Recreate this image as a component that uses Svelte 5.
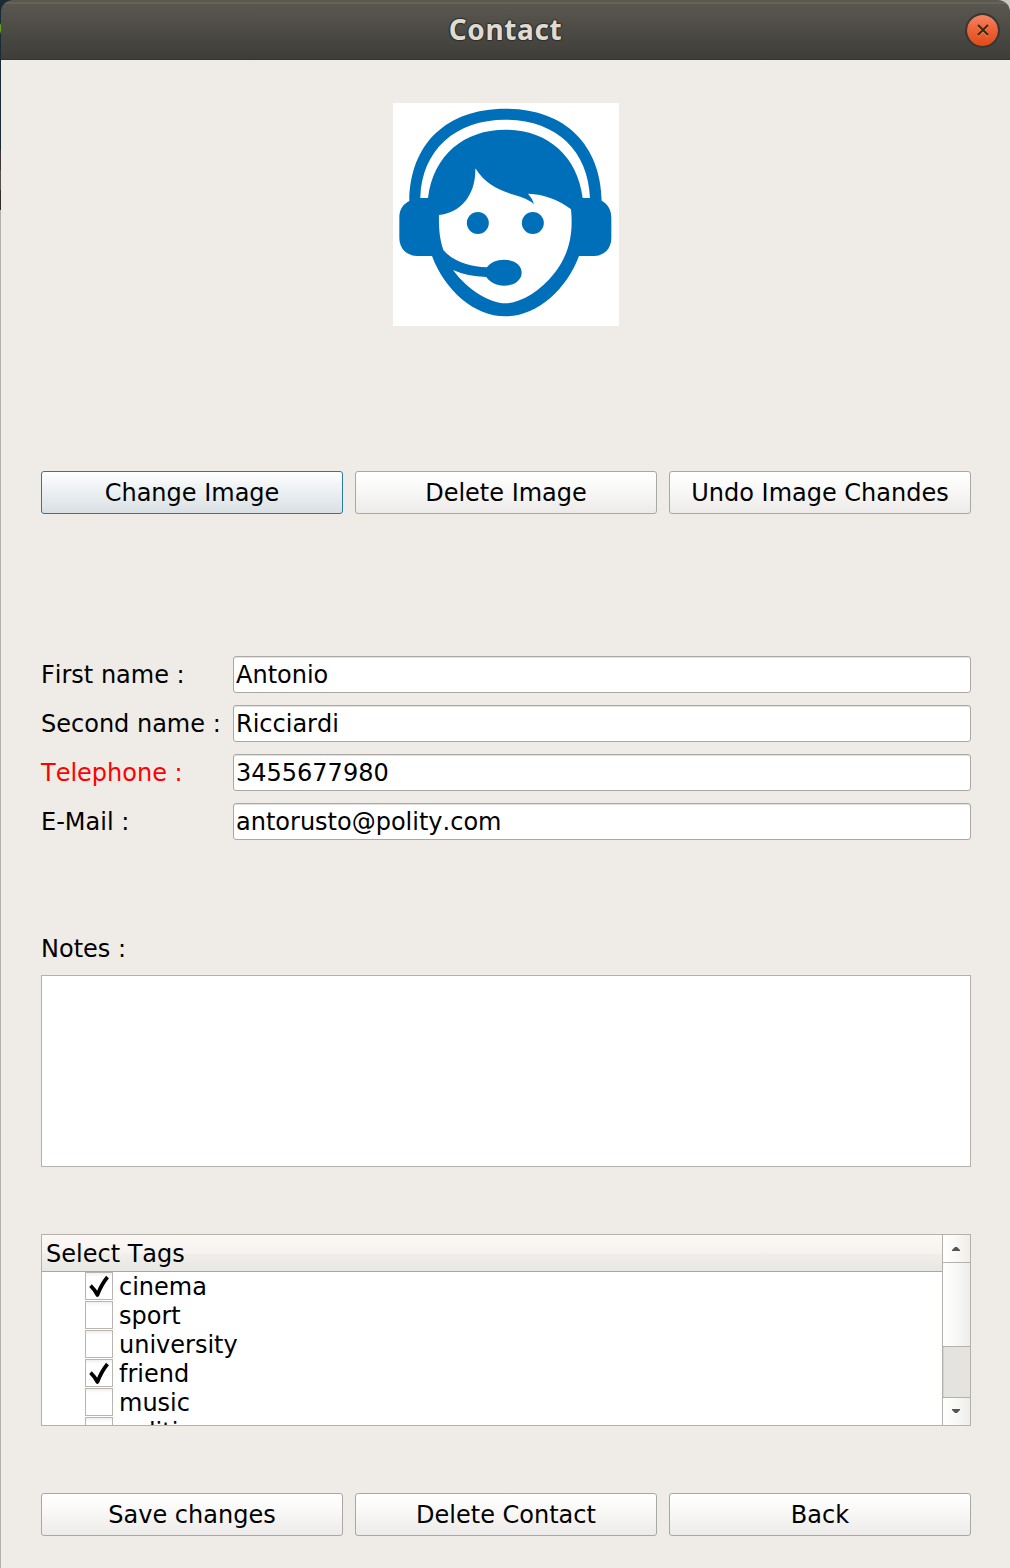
<script>
  const fields = [
    { label: 'First name :', value: 'Antonio' },
    { label: 'Second name :', value: 'Ricciardi' },
    { label: 'Telephone :', value: '3455677980', required: true },
    { label: 'E-Mail :', value: 'antorusto@polity.com' },
  ];
  const tags = [
    { name: 'cinema', checked: true },
    { name: 'sport', checked: false },
    { name: 'university', checked: false },
    { name: 'friend', checked: true },
    { name: 'music', checked: false },
    { name: 'politics', checked: false },
  ];
  const imageActions = ['Change Image', 'Delete Image', 'Undo Image Chandes'];
  const contactActions = ['Save changes', 'Delete Contact', 'Back'];
</script>

<div class="desktop">
  <div class="window">
    <header class="titlebar">
      <h1>Contact</h1>
      <button class="close" aria-label="Close">
        <svg width="14" height="14" viewBox="0 0 14 14"><path class="glow" d="M2 3.2 12 13.2M12 3.2 2 13.2" /><path class="cross" d="M2 2 12 12M12 2 2 12" /></svg>
      </button>
    </header>

    <main>
      <div class="avatar">
        <svg width="226" height="223" viewBox="24 24 678 669" preserveAspectRatio="none">
          <rect x="24" y="24" width="678" height="669" fill="#fff" />
          <g fill="#006fba">
            <path d="M73 318C75 147 184 41 361 41S647 147 650 317C667 327 679 342 679 368V430C679 461 657 483 628 483H582C543 587 454 664 361 664S180 587 141 483H96C66 483 43 461 43 430V368C43 342 55 327 73 318Z" />
          </g>
          <g fill="#fff">
            <path d="M106 309C110 165 211 74 361 74S610 165 615 309H593C577 180 485 104 361 104S145 180 129 309Z" />
            <path d="M271 220C301 268 346 288 389 300Q430 311 447 328Q442 309 429 296Q502 299 558 343C566 424 549 482 508 535C465 590 405 625 361 625S250 588 204 525Q245 544 304 546C315 562 333 572 357 572C387 572 410 556 410 533S387 494 357 494C334 494 315 503 306 517C255 515 206 501 175 465C164 431 161 401 162 360C226 354 273 300 271 220Z" />
          </g>
          <circle cx="278.500" cy="384" r="33" fill="#006fba" />
          <circle cx="443.500" cy="384" r="33" fill="#006fba" />
        </svg>
      </div>

      <div class="actions image-actions">
        {#each imageActions as text, i}
          <button class="push" class:focused={i === 0}>{text}</button>
        {/each}
      </div>

      <div class="form">
        {#each fields as f}
          <label class:required={f.required} for={f.label}>{f.label}</label>
          <input id={f.label} type="text" value={f.value} />
        {/each}
      </div>

      <label class="notes-label" for="notes">Notes :</label>
      <textarea id="notes"></textarea>

      <div class="tags">
        <div class="list">
          <div class="list-head">Select Tags</div>
          <div class="rows">
            {#each tags as t}
              <div class="row">
                <span class="box">
                  {#if t.checked}
                    <svg width="26" height="26" viewBox="0 0 26 26"><path d="M4.500 12.700Q8.500 16.500 11.500 22Q15 12 21.500 4" /></svg>
                  {/if}
                </span>
                <span class="name">{t.name}</span>
              </div>
            {/each}
          </div>
        </div>
        <div class="scrollbar">
          <div class="step up"><svg width="8" height="4" viewBox="0 0 8 4"><path d="M0 4V3L3 0H5L8 3V4Z" /></svg></div>
          <div class="thumb"></div>
          <div class="trough"></div>
          <div class="step down"><svg width="8" height="4" viewBox="0 0 8 4"><path d="M0 0V1L3 4H5L8 1V0Z" /></svg></div>
        </div>
      </div>

      <div class="actions contact-actions">
        {#each contactActions as text}
          <button class="push">{text}</button>
        {/each}
      </div>
    </main>
  </div>
</div>

<style>
  :global(body) { margin: 0; background: #efebe7; }
  .desktop, .desktop * { box-sizing: border-box; }
  .desktop {
    width: 1010px;
    height: 1568px;
    overflow: hidden;
    padding-left: 1px;
    background: linear-gradient(#172c35 0 23px, #66a411 25px 31px, #172c35 34px 150px, #3b3634 150px 170px, #55504d 170px 190px, #302b28 190px 210px, #b4b0ac 210px);
    font-family: 'DejaVu Sans', sans-serif;
    font-size: 24px;
    font-kerning: none;
    line-height: 29px;
    color: #000;
  }
  .window { height: 100%; background: linear-gradient(90deg, transparent 50%, #c9c7c6 50%) 0 0 / 100% 30px no-repeat, linear-gradient(transparent 30px, #efebe7 30px); }
  .titlebar {
    height: 60px;
    display: grid;
    grid-template-columns: 1fr auto 1fr;
    align-items: center;
    padding: 0 10px;
    border-radius: 12px 12px 0 0;
    background: linear-gradient(#5b594b 0 2px, #65635a 2px 4px, #59574f 4px, #3e3d39 59px, #353430 59px);
  }
  h1 {
    grid-column: 2;
    margin: 0;
    padding-bottom: 2px;
    font-family: 'Noto Sans', sans-serif;
    font-size: 28px;
    font-weight: 700;
    line-height: 38px;
    letter-spacing: 0.6px;
    color: #dfdbd2;
    text-shadow: 0 -1px 1px #2e2d2a, 0 1px 1px #2e2d2a, 1px 0 1px #2e2d2a, -1px 0 1px #2e2d2a;
  }
  .close {
    justify-self: end;
    width: 35px;
    height: 35px;
    padding: 0;
    display: grid;
    place-items: center;
    border: 2px solid #3a3733;
    border-radius: 50%;
    background: linear-gradient(#f58463, #ee6439 45%, #e04b17);
    background-clip: padding-box;
  }
  .close path { fill: none; stroke-width: 2; }
  .close .cross { stroke: #3a2a12; }
  .close .glow { stroke: #f2865f; }
  main { display: flex; flex-direction: column; padding: 43px 39px 0 40px; }
  .avatar { display: flex; justify-content: center; height: 223px; }
  .actions { display: grid; grid-template-columns: repeat(3, 302px); gap: 12px; }
  .image-actions { margin-top: 145px; }
  .contact-actions { margin-top: 67px; }
  .push {
    height: 43px;
    padding: 2px 0 0;
    border: 1px solid #aaa8a5;
    border-radius: 3px;
    background: linear-gradient(#fff, #fbfbfa 30%, #edebe9);
    font: inherit;
    font-kerning: none;
    color: #000;
  }
  .push.focused {
    border-color: #2b78a4;
    background: linear-gradient(#fff, #eef2f4 40%, #d9e0e4);
  }
  .form {
    margin-top: 142px;
    display: grid;
    grid-template-columns: 192px 1fr;
    row-gap: 12px;
    align-items: center;
  }
  .form label { padding-top: 2px; }
  .required { color: #f00; }
  input {
    width: 100%;
    height: 37px;
    padding: 0 2px;
    border: 1px solid #aaa8a5;
    border-radius: 3px;
    background: #fff;
    box-shadow: inset 0 1px 0 #e3e2e0;
    font: inherit;
    font-kerning: none;
    color: #000;
  }
  .notes-label { margin-top: 95px; }
  textarea {
    height: 192px;
    margin-top: 11px;
    border: 1px solid #b4b1ad;
    border-radius: 0;
    background: #fff;
    resize: none;
  }
  .tags {
    height: 192px;
    margin-top: 67px;
    display: flex;
    border: 1px solid #b4b1ad;
    background: #fff;
    overflow: hidden;
  }
  .list { flex: 1; overflow: hidden; }
  .list-head {
    height: 37px;
    padding: 5px 4px 0;
    border-bottom: 1px solid #a9a6a2;
    background: linear-gradient(#fcf8f5, #f5f2ef 50%, #f0eeeb 54%, #e9e7e3);
  }
  .row { display: flex; gap: 6px; height: 29px; padding-left: 43px; }
  .name { padding-top: 1px; }
  .box {
    width: 28px;
    height: 28px;
    border: 1px solid #b9b5ae;
    background: linear-gradient(#f0f0f0, #fff 4px);
  }
  .box svg { display: block; }
  .box path { fill: none; stroke: #000; stroke-width: 3.700; stroke-linejoin: round; }
  .scrollbar {
    width: 28px;
    display: flex;
    flex-direction: column;
    border-left: 1px solid #b4b1ad;
    background: #e4e3df;
  }
  .step, .thumb { background: linear-gradient(90deg, #fff, #fafaf8 40%, #eeedea); }
  .step { height: 28px; display: grid; place-items: center; padding-right: 1px; }
  .step path { fill: #555; }
  .up, .thumb { border-bottom: 1px solid #b4b1ad; }
  .down { border-top: 1px solid #b4b1ad; padding-bottom: 1px; }
  .thumb { height: 84px; }
  .trough { flex: 1; box-shadow: inset 1px 0 0 #d3d2ce; }
</style>
